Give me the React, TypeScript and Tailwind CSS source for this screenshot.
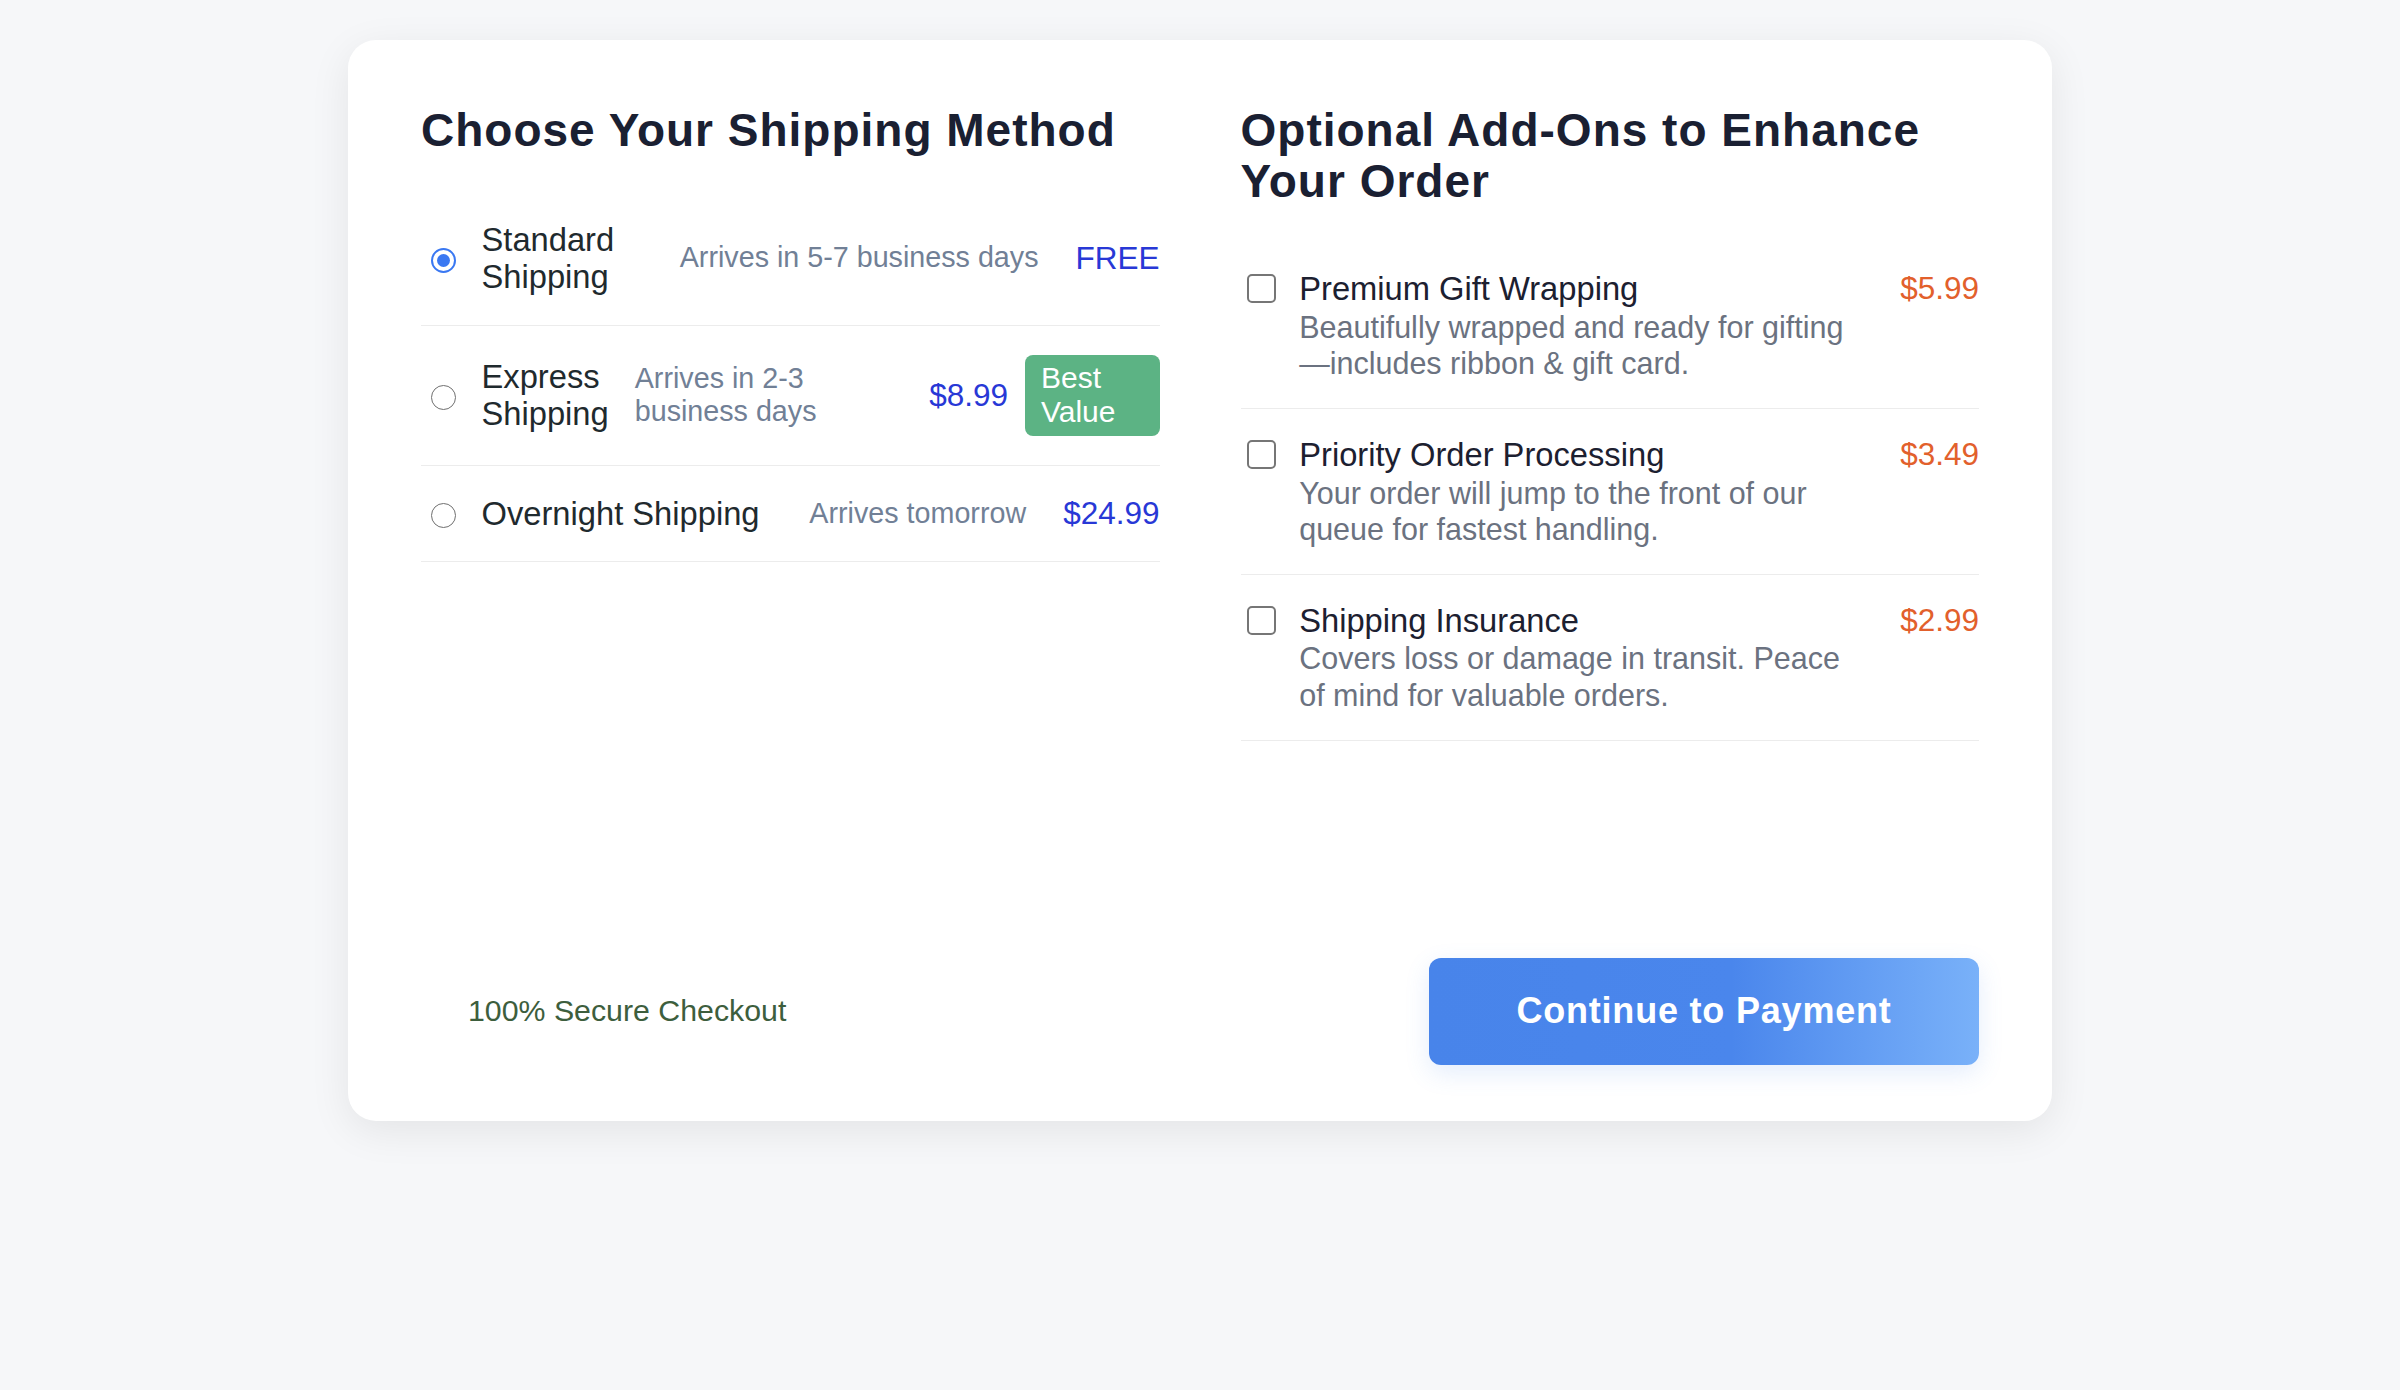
import React from "react";

type Ship = { name: string; desc: string; price: string; badge?: string; checked?: boolean };
type Addon = { name: string; desc: string; price: string };

const ships: Ship[] = [
  { name: "Standard Shipping", desc: "Arrives in 5-7 business days", price: "FREE", checked: true },
  { name: "Express Shipping", desc: "Arrives in 2-3 business days", price: "$8.99", badge: "Best Value" },
  { name: "Overnight Shipping", desc: "Arrives tomorrow", price: "$24.99" },
];

const addons: Addon[] = [
  { name: "Premium Gift Wrapping", desc: "Beautifully wrapped and ready for gifting\u200B—includes ribbon & gift card.", price: "$5.99" },
  { name: "Priority Order Processing", desc: "Your order will jump to the front of our queue for fastest handling.", price: "$3.49" },
  { name: "Shipping Insurance", desc: "Covers loss or damage in transit. Peace of mind for valuable orders.", price: "$2.99" },
];

function Radio({ checked }: { checked?: boolean }) {
  if (checked) {
    return (
      <div className="ml-[9.5px] mt-[4px] w-[25px] h-[25px] shrink-0 rounded-full border-[2.5px] border-[#3a78f2] flex items-center justify-center">
        <div className="w-[13px] h-[13px] rounded-full bg-[#3a78f2]" />
      </div>
    );
  }
  return <div className="ml-[9.5px] mt-[4px] w-[25px] h-[25px] shrink-0 rounded-full border-[1.5px] border-[#6f6f6f] bg-white" />;
}

export default function App() {
  return (
    <div className="w-full min-h-[1390px] bg-[#f6f7f9] pt-[40px] font-['Liberation_Sans',Arial,sans-serif]">
      <div className="mx-auto w-[1704px] bg-white rounded-[28px] shadow-[0_10px_40px_rgba(0,0,0,0.08)] px-[73px] pt-[65px] pb-[56px]">
        <div className="grid grid-cols-2 gap-x-[81px] items-start">
          <section>
            <h2 className="text-[46px] font-bold leading-[1.1] tracking-[1px] text-[#1a2032] mb-[36px]">
              Choose Your Shipping Method
            </h2>
            <div>
              {ships.map((s) => (
                <div key={s.name} className="flex items-center py-[29px] border-b border-[#ececec]">
                  <Radio checked={s.checked} />
                  <div className="ml-[26px] flex-1 text-[32.7px] leading-[1.15] text-[#1f2a2e]">{s.name}</div>
                  <div className="ml-[26px] text-[28.7px] leading-[1.17] text-[#718096]">{s.desc}</div>
                  <div className="ml-[37px] shrink-0 whitespace-nowrap text-[31.5px] leading-[1.15] text-[#2838d6]">{s.price}</div>
                  {s.badge && (
                    <div className="ml-[17px] px-[16px] py-[6px] rounded-[8px] bg-[#5cb384] text-white text-[30px] leading-[1.15]">
                      {s.badge}
                    </div>
                  )}
                </div>
              ))}
            </div>
          </section>
          <section>
            <h2 className="text-[46px] font-bold leading-[1.1] tracking-[1px] text-[#1a2032] mb-[37px]">
              Optional Add-Ons to Enhance Your Order
            </h2>
            <div>
              {addons.map((a) => (
                <div key={a.name} className="flex items-start pt-[27px] pb-[26px] border-b border-[#ececec]">
                  <div className="mt-[4px] ml-[6.7px] w-[29px] h-[29px] shrink-0 rounded-[5px] border-[2.5px] border-[#767676] bg-white" />
                  <div className="ml-[23px] flex-1">
                    <div className="text-[32.7px] leading-[1.15] text-[#1c2030]">{a.name}</div>
                    <div className="mt-[1px] max-w-[556px] text-[30.5px] leading-[1.2] text-[#6b7280]">{a.desc}</div>
                  </div>
                  <div className="ml-[24px] shrink-0 text-[31.5px] leading-[1.15] text-[#e2602c]">{a.price}</div>
                </div>
              ))}
            </div>
          </section>
        </div>
        <div className="mt-[217px] flex items-center justify-between">
          <div className="pl-[47px] text-[30.3px] leading-[1.15] text-[#3d5e3d]">100% Secure Checkout</div>
          <button className="w-[550px] h-[107px] rounded-[12px] bg-[linear-gradient(90deg,#4884ea_0%,#4a86ec_55%,#79b1f9_100%)] text-white font-bold text-[36px] tracking-[0.8px] shadow-[0_8px_24px_rgba(72,132,234,0.15)]">
            Continue to Payment
          </button>
        </div>
      </div>
    </div>
  );
}
